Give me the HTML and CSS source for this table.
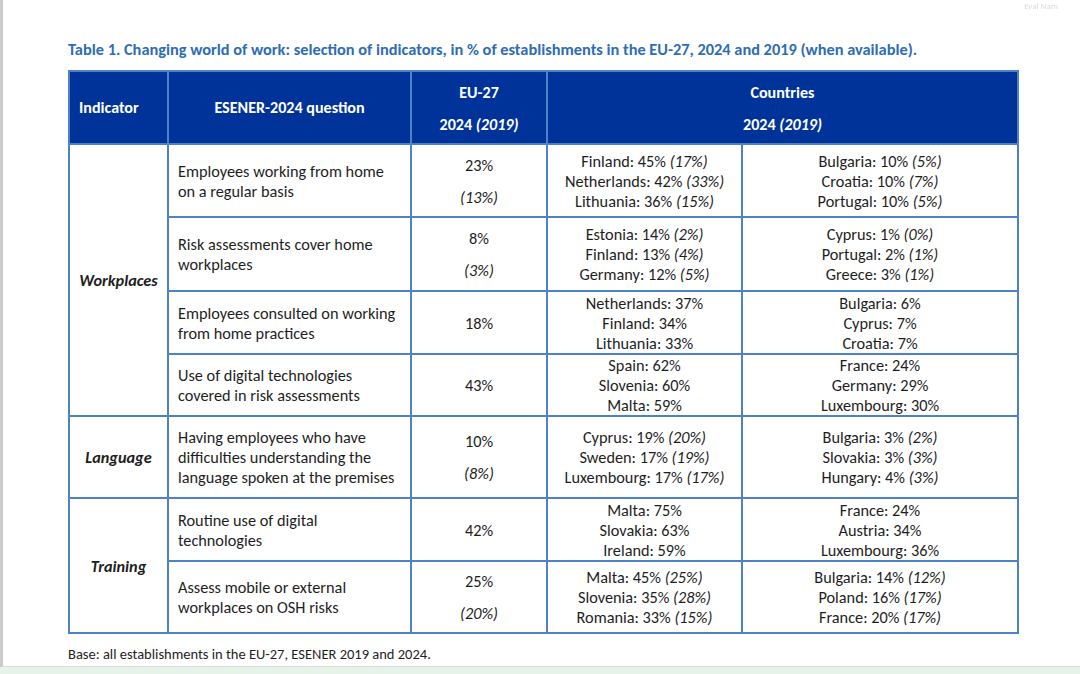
FILE: index.html
```html
<!DOCTYPE html>
<html lang="en">
<head>
<meta charset="utf-8">
<title>Table 1</title>
<link rel="stylesheet" href="styles.css">
</head>
<body>
<div class="viewer">
  <div class="page">
    <div class="corner-mark">Eyal Nam</div>
    <h1 class="title">Table 1. Changing world of work: selection of indicators, in % of establishments in the EU-27, 2024 and 2019 (when available).</h1>
    <table class="data">
      <colgroup>
        <col class="c-ind"><col class="c-q"><col class="c-eu"><col class="c-ca"><col class="c-cb">
      </colgroup>
      <thead>
        <tr class="h-head">
          <th class="th-left">Indicator</th>
          <th>ESENER-2024 question</th>
          <th><div class="two-head"><span>EU-27</span><span>2024 <i>(2019)</i></span></div></th>
          <th colspan="2"><div class="two-head"><span>Countries</span><span>2024 <i>(2019)</i></span></div></th>
        </tr>
      </thead>
      <tbody>
        <tr class="r1">
          <td rowspan="4" class="group">Workplaces</td>
          <td class="q">Employees working from home on a regular basis</td>
          <td class="eu"><div class="two"><span>23%</span><i>(13%)</i></div></td>
          <td class="ct">Finland: 45% <i>(17%)</i><br>Netherlands: 42% <i>(33%)</i><br>Lithuania: 36% <i>(15%)</i></td>
          <td class="ct">Bulgaria: 10% <i>(5%)</i><br>Croatia: 10% <i>(7%)</i><br>Portugal: 10% <i>(5%)</i></td>
        </tr>
        <tr class="r2">
          <td class="q">Risk assessments cover home workplaces</td>
          <td class="eu"><div class="two"><span>8%</span><i>(3%)</i></div></td>
          <td class="ct">Estonia: 14% <i>(2%)</i><br>Finland: 13% <i>(4%)</i><br>Germany: 12% <i>(5%)</i></td>
          <td class="ct">Cyprus: 1% <i>(0%)</i><br>Portugal: 2% <i>(1%)</i><br>Greece: 3% <i>(1%)</i></td>
        </tr>
        <tr class="r3">
          <td class="q">Employees consulted on working from home practices</td>
          <td class="eu">18%</td>
          <td class="ct">Netherlands: 37%<br>Finland: 34%<br>Lithuania: 33%</td>
          <td class="ct">Bulgaria: 6%<br>Cyprus: 7%<br>Croatia: 7%</td>
        </tr>
        <tr class="r4">
          <td class="q">Use of digital technologies covered in risk assessments</td>
          <td class="eu">43%</td>
          <td class="ct">Spain: 62%<br>Slovenia: 60%<br>Malta: 59%</td>
          <td class="ct">France: 24%<br>Germany: 29%<br>Luxembourg: 30%</td>
        </tr>
        <tr class="r5">
          <td class="group">Language</td>
          <td class="q">Having employees who have difficulties understanding the language spoken at the premises</td>
          <td class="eu"><div class="two"><span>10%</span><i>(8%)</i></div></td>
          <td class="ct">Cyprus: 19% <i>(20%)</i><br>Sweden: 17% <i>(19%)</i><br>Luxembourg: 17% <i>(17%)</i></td>
          <td class="ct">Bulgaria: 3% <i>(2%)</i><br>Slovakia: 3% <i>(3%)</i><br>Hungary: 4% <i>(3%)</i></td>
        </tr>
        <tr class="r6">
          <td rowspan="2" class="group">Training</td>
          <td class="q">Routine use of digital technologies</td>
          <td class="eu">42%</td>
          <td class="ct">Malta: 75%<br>Slovakia: 63%<br>Ireland: 59%</td>
          <td class="ct">France: 24%<br>Austria: 34%<br>Luxembourg: 36%</td>
        </tr>
        <tr class="r7">
          <td class="q">Assess mobile or external workplaces on OSH risks</td>
          <td class="eu"><div class="two"><span>25%</span><i>(20%)</i></div></td>
          <td class="ct">Malta: 45% <i>(25%)</i><br>Slovenia: 35% <i>(28%)</i><br>Romania: 33% <i>(15%)</i></td>
          <td class="ct">Bulgaria: 14% <i>(12%)</i><br>Poland: 16% <i>(17%)</i><br>France: 20% <i>(17%)</i></td>
        </tr>
      </tbody>
    </table>
    <p class="note">Base: all establishments in the EU-27, ESENER 2019 and 2024.</p>
  </div>
  <div class="bottom-bar"></div>
</div>
</body>
</html>
```

FILE: styles.css
```css
* { box-sizing: border-box; }
html, body {
  margin: 0;
  padding: 0;
  background: #ffffff;
}
body {
  width: 1080px;
  height: 674px;
  overflow: hidden;
  font-family: Carlito, "Liberation Sans", Arial, sans-serif;
  color: #1e1e1e;
}
.viewer {
  height: 674px;
  display: flex;
  flex-direction: column;
}
.page {
  position: relative;
  flex: 1;
  border-left: 3px solid #cbcbcb;
  border-bottom: 1px solid #dcdcdc;
  padding: 39px 0 0 65px;
  background: #ffffff;
}
.corner-mark {
  position: absolute;
  top: 1px;
  right: 22px;
  font-size: 9px;
  line-height: 10px;
  color: #dadada;
  filter: blur(0.5px);
}
.title {
  margin: 0 0 11px 0;
  font-size: 16.35px;
  line-height: 20px;
  font-weight: bold;
  color: #2e6db4;
  white-space: nowrap;
}
.data {
  border-collapse: collapse;
  table-layout: fixed;
  width: 949px;
  font-size: 16.3px;
  line-height: 20px;
}
.c-ind { width: 99px; }
.c-q { width: 243px; }
.c-eu { width: 136px; }
.c-ca { width: 195px; }
.c-cb { width: 276px; }
.data th, .data td {
  border: 2px solid #4f81c6;
  padding: 0 9px;
  vertical-align: middle;
}
.data th {
  background: #003399;
  color: #ffffff;
  font-weight: bold;
  text-align: center;
  font-size: 16.1px;
}
.data th.th-left { text-align: left; }
.h-head { height: 73px; }
.two-head {
  display: flex;
  flex-direction: column;
  align-items: center;
  gap: 12px;
  padding-top: 2px;
}
.r1 { height: 73px; }
.r2 { height: 74px; }
.r3 { height: 63px; }
.r4 { height: 62px; }
.r5 { height: 82px; }
.r6 { height: 63px; }
.r7 { height: 72px; }
.group {
  text-align: center;
  font-weight: bold;
  font-style: italic;
}
.q { text-align: left; }
.eu, .ct { text-align: center; }
.two {
  display: flex;
  flex-direction: column;
  align-items: center;
  gap: 12px;
}
.note {
  margin: 12px 0 0 0;
  font-size: 14.5px;
  line-height: 16px;
}
.bottom-bar {
  height: 7px;
  background: #e6f3e8;
}
```
